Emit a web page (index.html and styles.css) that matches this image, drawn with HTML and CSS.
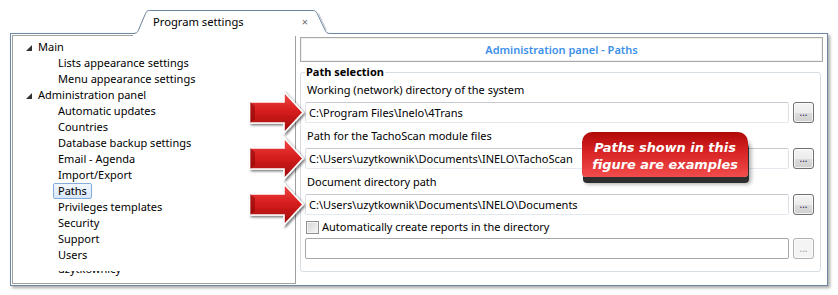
FILE: index.html
```html
<!DOCTYPE html>
<html>
<head>
<meta charset="utf-8">
<title>Program settings</title>
<link rel="stylesheet" href="styles.css">
</head>
<body>
<div class="page">
  <div class="tabbar">
    <div class="tab">
      <svg class="tab-shape" width="197" height="26" viewBox="0 0 197 26">
        <path d="M0 23.5 C3 23.5 4.5 22.5 5.5 20 L12.5 3.5 C13.3 1.5 14.5 0.5 16.5 0.5 L180 0.5 C182 0.5 183.3 1.5 184.2 3.5 L192 20 C193 22.5 194.5 23.5 197 23.5 L197 26 L0 26 Z" fill="#ffffff"/>
        <path d="M0 23.5 C3 23.5 4.5 22.5 5.5 20 L12.5 3.5 C13.3 1.5 14.5 0.5 16.5 0.5 L180 0.5 C182 0.5 183.3 1.5 184.2 3.5 L192 20 C193 22.5 194.5 23.5 197 23.5" fill="none" stroke="#6d84a0"/>
        <path d="M185.5 3.5 L193.5 20.5" fill="none" stroke="#c9cfd6" stroke-width="1.2"/>
      </svg>
      <span class="tab-title">Program settings</span>
      <span class="tab-close">×</span>
    </div>
  </div>
  <div class="frame">
    <div class="tree">
      <div class="row l1"><svg class="exp" width="6" height="6" viewBox="0 0 6 6"><polygon points="6,0 6,6 0,6" fill="#333"/></svg>Main</div>
      <div class="row l2">Lists appearance settings</div>
      <div class="row l2">Menu appearance settings</div>
      <div class="row l1"><svg class="exp" width="6" height="6" viewBox="0 0 6 6"><polygon points="6,0 6,6 0,6" fill="#333"/></svg>Administration panel</div>
      <div class="row l2">Automatic updates</div>
      <div class="row l2">Countries</div>
      <div class="row l2">Database backup settings</div>
      <div class="row l2">Email - Agenda</div>
      <div class="row l2">Import/Export</div>
      <div class="row l2"><span class="selected">Paths</span></div>
      <div class="row l2">Privileges templates</div>
      <div class="row l2">Security</div>
      <div class="row l2">Support</div>
      <div class="row l2">Users</div>
      <div class="row l2 cut"><span class="cut-text">użytkownicy</span></div>
    </div>
    <div class="content">
      <div class="header">Administration panel - Paths</div>
      <fieldset class="group">
        <legend class="legend">Path selection</legend>
        <div class="label first">Working (network) directory of the system</div>
        <div class="field">
          <div class="input">C:\Program Files\Inelo\4Trans</div>
          <div class="btn">...</div>
        </div>
        <div class="label">Path for the TachoScan module files</div>
        <div class="field">
          <div class="input">C:\Users\uzytkownik\Documents\INELO\TachoScan</div>
          <div class="btn">...</div>
        </div>
        <div class="label">Document directory path</div>
        <div class="field">
          <div class="input">C:\Users\uzytkownik\Documents\INELO\Documents</div>
          <div class="btn">...</div>
        </div>
        <div class="check-row"><span class="checkbox"></span>Automatically create reports in the directory</div>
        <div class="field last">
          <div class="input disabled"></div>
          <div class="btn disabled">...</div>
        </div>
      </fieldset>
    </div>
  </div>

  <svg class="arrow a1" width="60" height="48" viewBox="0 0 60 48"><use href="#arrowShape"/></svg>
  <svg class="arrow a2" width="60" height="48" viewBox="0 0 60 48"><use href="#arrowShape"/></svg>
  <svg class="arrow a3" width="60" height="48" viewBox="0 0 60 48"><use href="#arrowShape"/></svg>

  <div class="callout">Paths shown in this<br>figure are examples</div>

  <svg class="defs" width="0" height="0">
    <defs>
      <linearGradient id="arrowGrad" x1="0" y1="0" x2="0" y2="1">
        <stop offset="0" stop-color="#f04a4a"/>
        <stop offset="0.45" stop-color="#d81e1e"/>
        <stop offset="1" stop-color="#9c0a0a"/>
      </linearGradient>
      <filter id="arrowShadow" x="-20%" y="-20%" width="150%" height="150%">
        <feDropShadow dx="1.5" dy="1.5" stdDeviation="1.2" flood-color="#000" flood-opacity="0.55"/>
      </filter>
      <g id="arrowShape">
        <polygon points="4,13 38,13 38,3 57,23.5 38,44 38,34 4,34" fill="url(#arrowGrad)" stroke="#ffffff" stroke-width="1.6" stroke-linejoin="miter" filter="url(#arrowShadow)"/>
        <polygon points="4,13 9,17 9,30 4,34" fill="#8a0606" opacity="0.55"/>
      </g>
    </defs>
  </svg>
</div>
</body>
</html>
```

FILE: styles.css
```css
html, body {
  margin: 0;
  padding: 0;
  background: #ffffff;
}

body {
  font-family: "Noto Sans", "Open Sans", sans-serif;
  font-size: 11px;
  color: #000;
}

.page {
  position: relative;
  width: 838px;
  height: 295px;
  overflow: hidden;
}

.defs {
  position: absolute;
  width: 0;
  height: 0;
}

/* tab */
.tabbar {
  display: flex;
  align-items: flex-start;
  height: 33px;
}

.tab {
  position: relative;
  z-index: 2;
  margin-left: 133px;
  margin-top: 10px;
  width: 197px;
  height: 24px;
  display: flex;
  align-items: center;
}

.tab-shape {
  position: absolute;
  left: 0;
  top: 0;
}

.tab-title {
  position: relative;
  margin-left: 20px;
  font-size: 11.2px;
  line-height: 24px;
  color: #000;
}

.tab-close {
  position: relative;
  margin-left: auto;
  margin-right: 22px;
  font-size: 11px;
  line-height: 24px;
  color: #6a6a6a;
}

/* frame */
.frame {
  box-sizing: border-box;
  margin-left: 10px;
  width: 818px;
  height: 253px;
  border: 1px solid #6e87a5;
  box-shadow: 2px 2px 3px rgba(0, 0, 0, 0.35);
  padding: 1px 4px 1px 1px;
  display: flex;
  gap: 4px;
  background: #fff;
}

.tree {
  box-sizing: border-box;
  width: 284px;
  border: 1px solid #a0a0a0;
  padding-top: 3px;
  overflow: hidden;
}

.row {
  height: 16px;
  line-height: 16px;
  white-space: nowrap;
  display: flex;
  align-items: center;
}

.row.l1 {
  padding-left: 13px;
}

.exp {
  margin-right: 6px;
  margin-top: 1px;
}

.row.l2 {
  padding-left: 45px;
}

.selected {
  margin-left: -5px;
  padding: 0 4px;
  line-height: 14px;
  border: 1px solid #84acdd;
  border-radius: 2px;
  background: linear-gradient(#f1f7fe, #d7e7fa);
}

.row.cut {
  height: 6px;
  align-items: flex-start;
  overflow: hidden;
  margin-top: 8px;
}

.cut-text {
  display: block;
  margin-top: -10px;
  line-height: 16px;
}

/* content */
.content {
  flex: 1;
  display: flex;
  flex-direction: column;
}

.header {
  box-sizing: border-box;
  margin-top: 2px;
  height: 25px;
  border: 1px solid #a9a9a9;
  box-shadow: inset 0 0 0 1px #f0f0f0;
  text-align: center;
  line-height: 23px;
  font-weight: 600;
  color: #3c8fe8;
}

.group {
  margin: 3px 2px 0 0;
  padding: 0 6px 12px 4px;
  border: 1px solid #d5dde3;
  border-radius: 3px;
  min-width: 0;
}

.legend {
  padding: 0 1px;
  margin-left: 0;
  font-weight: 700;
  line-height: 14px;
}

.label {
  margin-left: 2px;
  margin-top: 5px;
  margin-bottom: 4px;
  height: 16px;
  line-height: 16px;
}

.label.first {
  margin-top: 3px;
}

.field {
  display: flex;
  gap: 4px;
  height: 21px;
}

.input {
  box-sizing: border-box;
  flex: 1;
  height: 21px;
  border: 1px solid;
  border-color: #c6cbd2 #dde2e8 #e3e9ef #dde2e8;
  border-radius: 2px;
  padding-left: 3px;
  line-height: 19px;
  white-space: nowrap;
  overflow: hidden;
}

.input.disabled {
  border-color: #a7a7a7;
}

.btn {
  box-sizing: border-box;
  width: 21px;
  height: 21px;
  border: 1px solid #707070;
  border-radius: 3px;
  background: linear-gradient(#f4f4f4 0%, #ececec 50%, #dcdcdc 51%, #d0d0d0 100%);
  box-shadow: inset 0 0 0 1px rgba(255,255,255,0.7);
  text-align: center;
  font-size: 10px;
  line-height: 19px;
  color: #2a2050;
}

.btn.disabled {
  border-color: #adb2b5;
  background: #f4f4f4;
  color: #9a9a9a;
}

.check-row {
  display: flex;
  align-items: center;
  margin-top: 4px;
  margin-bottom: 3px;
  height: 16px;
  line-height: 16px;
}

.checkbox {
  box-sizing: border-box;
  width: 13px;
  height: 13px;
  margin-left: 1px;
  margin-right: 3px;
  border: 1px solid #8e8f8f;
  background: linear-gradient(135deg, #d4d4d4, #f6f6f6);
  box-shadow: inset 0 0 0 1px #f4f4f4;
}

/* overlays */
.arrow {
  position: absolute;
  left: 246px;
  overflow: visible;
}

.a1 { top: 89px; }
.a2 { top: 135px; }
.a3 { top: 181px; }

.callout {
  position: absolute;
  left: 582px;
  top: 132px;
  box-sizing: border-box;
  width: 166px;
  height: 45px;
  padding-top: 7px;
  border-radius: 10px 10px 4px 4px;
  background: linear-gradient(#b00808, #d82424 45%, #f24c4c);
  box-shadow: 1px 6px 0 #2e2e2e, 3px 7px 4px rgba(0, 0, 0, 0.35);
  color: #fff;
  text-align: center;
  font-family: "DejaVu Sans", Verdana, sans-serif;
  font-weight: 700;
  font-style: italic;
  font-size: 12.9px;
  line-height: 17px;
}
```
